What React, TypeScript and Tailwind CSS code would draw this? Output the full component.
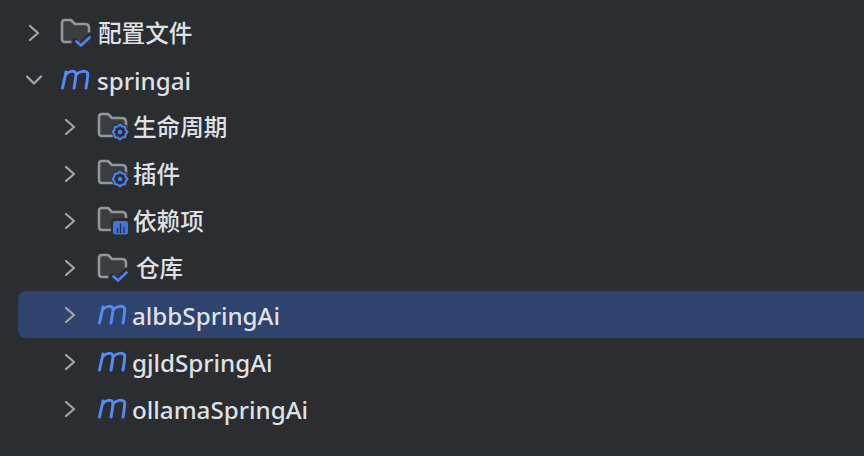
import React from "react";

const Chevron = ({ open = false }: { open?: boolean }) => (
  <svg width="16" height="20" viewBox="0 0 16 20" fill="none" stroke="#a3a5a9" strokeWidth="2.2" strokeLinecap="round" strokeLinejoin="round">
    {open ? <path d="M1 6.5 L8 13.5 L15 6.5" /> : <path d="M4 3 L12 10 L4 17" />}
  </svg>
);

const MIcon = () => (
  <svg width="30" height="26" viewBox="0 0 30 26" fill="none" stroke="#548af7" strokeWidth="3" strokeLinecap="round" strokeLinejoin="round">
    <path d="M2.5 21 L6 5 M5.4 8 C8.5 4 14.5 3 15.8 6 C16.4 8 15.2 14 14 21 M15.8 8 C19 4 26 3 27.6 6 C28.2 8 27 15 26 21" />
  </svg>
);

type Badge = "check" | "gear" | "chart";

const gearPoints = "M23 12.5 L25.2 14.5 L28 14.8 L28.6 17.6 L30.4 20 L28.6 22.4 L28 25.2 L25.2 25.5 L23 27.5 L20.8 25.5 L18 25.2 L17.4 22.4 L15.6 20 L17.4 17.6 L18 14.8 L20.8 14.5 Z";

const FolderIcon = ({ badge }: { badge: Badge }) => (
  <svg width="32" height="30" viewBox="0 0 32 30" fill="none">
    <path
      d="M5 2 H11 L15 6 H25 Q29 6 29 10 V20 Q29 24 25 24 H5 Q2 24 2 21 V5 Q2 2 5 2 Z"
      fill="#3b3d41"
      stroke="#93969b"
      strokeWidth="2.6"
      strokeLinejoin="round"
    />
    {badge === "check" && (
      <>
        <path d="M15 24 L20 28 L30 18" stroke="#2b2d30" strokeWidth="7" strokeLinecap="round" strokeLinejoin="round" />
        <path d="M16.5 23.5 L21 27.5 L29.5 19.5" stroke="#4c82ee" strokeWidth="2.8" strokeLinecap="round" strokeLinejoin="round" />
      </>
    )}
    {badge === "gear" && (
      <>
        <path d={gearPoints} fill="#2b2d30" stroke="#2b2d30" strokeWidth="4" />
        <path d={gearPoints} fill="#2b2d30" stroke="#4c82ee" strokeWidth="2.2" strokeLinejoin="round" />
        <circle cx="23" cy="20" r="2.2" fill="#4c82ee" />
      </>
    )}
    {badge === "chart" && (
      <>
        <rect x="14" y="12" width="18" height="18" rx="3" fill="#2b2d30" />
        <rect x="16" y="15" width="15" height="13.5" rx="2.5" fill="#3f75e0" />
        <path d="M20.5 27 V22 M23.5 27 V17.5 M27 27 V21" stroke="#2b2d30" strokeWidth="1.3" />
      </>
    )}
  </svg>
);

type RowProps = {
  level: 0 | 1;
  open?: boolean;
  icon: React.ReactNode;
  label: string;
  selected?: boolean;
  latin?: boolean;
  textClass?: string;
};

const Row = ({ level, open, icon, label, selected, latin, textClass = "" }: RowProps) => (
  <div className={`h-[47px] flex items-center rounded-l-lg ${selected ? "bg-[#2e436e]" : ""} ${level === 0 ? "pl-[8px]" : "pl-[44px]"}`}>
    <div className="w-[34px] flex justify-start shrink-0">
      <Chevron open={open} />
    </div>
    <div className={`shrink-0 flex items-center ${level === 0 ? "w-[38px]" : "w-[37px] pl-[1px]"}`}>{icon}</div>
    <span className={`leading-none pt-[3px] text-[#dfe1e5] whitespace-nowrap font-medium ${latin ? "text-[24.2px] -ml-px" : "text-[23.6px]"} ${textClass}`}>{label}</span>
  </div>
);

export default function App() {
  return (
    <div
      className="w-[864px] h-[456px] overflow-hidden bg-[#2b2d30] pt-[9px] pl-[18px]"
      style={{ fontFamily: '"Noto Sans", "Noto Sans CJK SC", sans-serif' }}
    >
      <Row level={0} icon={<FolderIcon badge="check" />} label="配置文件" />
      <Row level={0} open icon={<MIcon />} label="springai" latin />
      <Row level={1} icon={<FolderIcon badge="gear" />} label="生命周期" />
      <Row level={1} icon={<FolderIcon badge="gear" />} label="插件" />
      <Row level={1} icon={<FolderIcon badge="chart" />} label="依赖项" />
      <Row level={1} icon={<FolderIcon badge="check" />} label="仓库" textClass="ml-[3px]" />
      <Row level={1} selected icon={<MIcon />} label="albbSpringAi" latin />
      <Row level={1} icon={<MIcon />} label="gjldSpringAi" latin />
      <Row level={1} icon={<MIcon />} label="ollamaSpringAi" latin />
    </div>
  );
}
